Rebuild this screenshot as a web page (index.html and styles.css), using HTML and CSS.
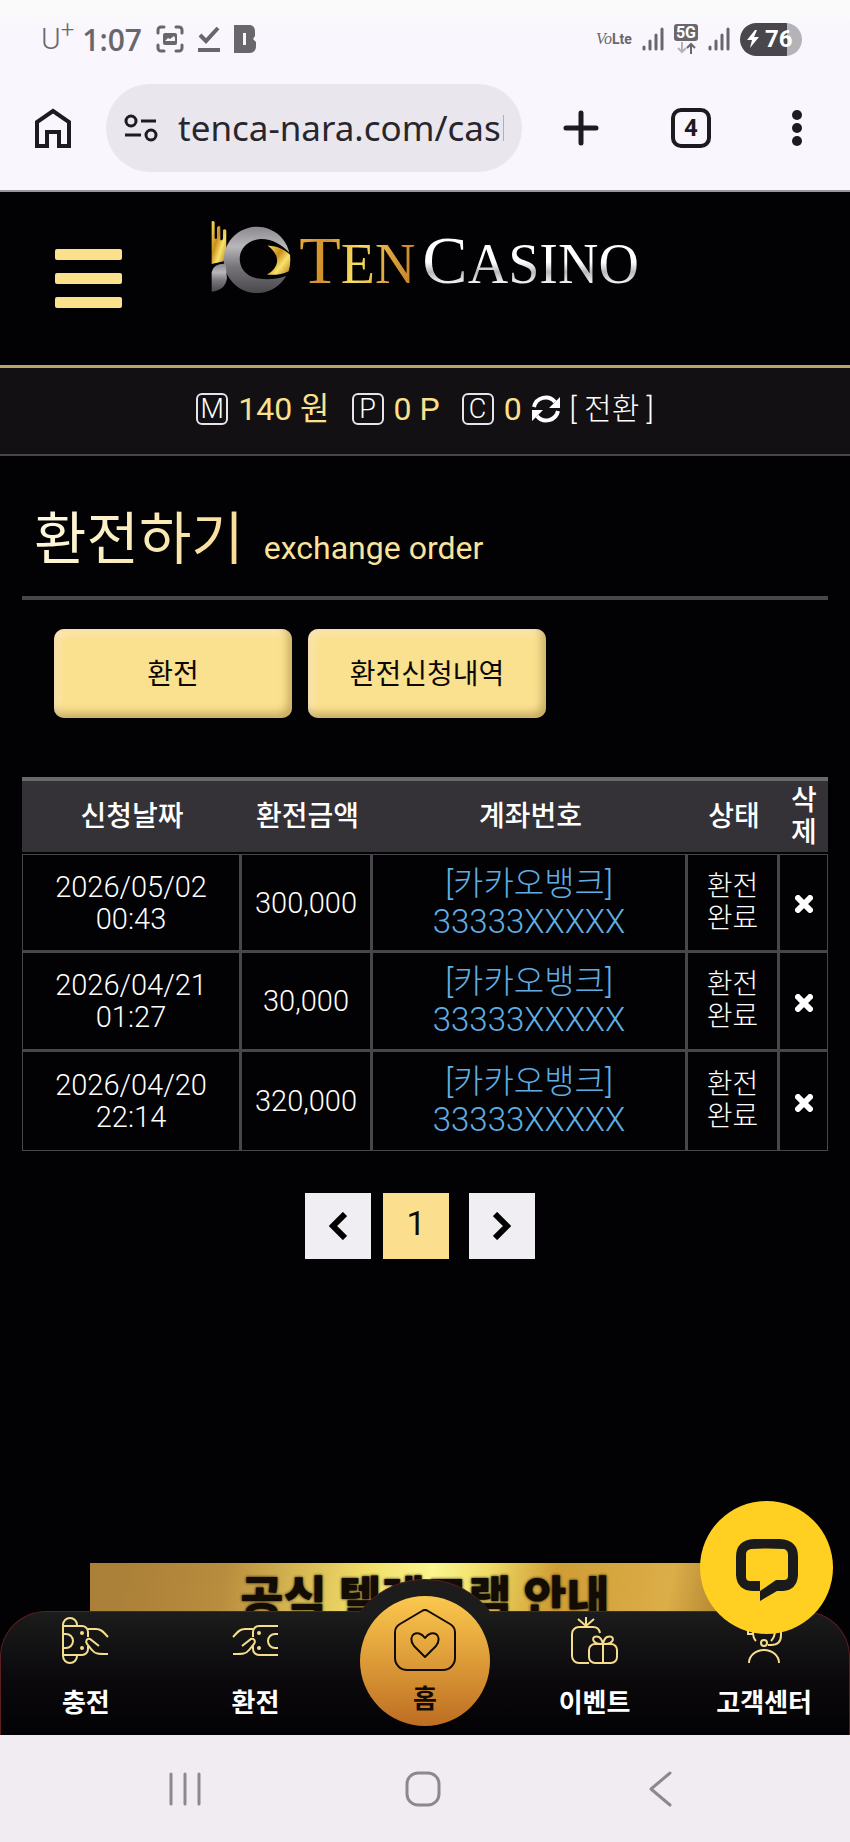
FILE: index.html
```html
<!DOCTYPE html>
<html lang="ko">
<head>
<meta charset="utf-8">
<meta name="viewport" content="width=device-width, initial-scale=1">
<title>TEN CASINO - 환전하기</title>
<link rel="stylesheet" href="styles.css">
</head>
<body>
<header class="chrome">
  <div class="status">
    <span class="carrier">U<sup>+</sup></span>
    <span class="clock">1:07</span>
    <svg class="status-icon" width="28" height="28" viewBox="0 0 28 28" fill="none" stroke="currentColor" stroke-width="3" stroke-linecap="round">
      <path d="M2 8V5a3 3 0 0 1 3-3h3M20 2h3a3 3 0 0 1 3 3v3M26 20v3a3 3 0 0 1-3 3h-3M8 26H5a3 3 0 0 1-3-3v-3"/>
      <rect x="7" y="8" width="14" height="12" rx="2" fill="currentColor" stroke="none"/>
      <path d="M9 16l3-3 2 1 4-3 1 2v3z" fill="#f9f7fc" stroke="none"/>
    </svg>
    <svg class="status-icon" width="22" height="26" viewBox="0 0 22 26" fill="none" stroke="currentColor" stroke-width="4">
      <path d="M2 9l6 6L20 2M0 24h22"/>
    </svg>
    <svg class="status-icon" width="22" height="28" viewBox="0 0 22 28">
      <path fill="currentColor" fill-rule="evenodd" d="M0 0h16a5 6 0 0 1 5 6v5l-2 3 3 3v5a6 6 0 0 1-6 6H0zM9 8v12h3V8z"/>
    </svg>
    <span class="status-right">
      <span class="volte"><i>Vo</i><b>Lte</b></span>
      <svg width="22" height="24" viewBox="0 0 22 24" stroke="currentColor" stroke-width="3" stroke-linecap="round"><path d="M2 20v2M8 14v8M14 8v14M20 2v20"/></svg>
      <span class="net"><b>5G</b>
        <svg width="20" height="12" viewBox="0 0 20 12" fill="none" stroke-width="2"><path d="M6 0v10M2 6l4 4 4-4" stroke="#b5b3b8"/><path d="M15 12V2M11 6l4-4 4 4" stroke="currentColor"/></svg>
      </span>
      <svg width="22" height="24" viewBox="0 0 22 24" stroke="currentColor" stroke-width="3" stroke-linecap="round"><path d="M2 20v2M8 14v8M14 8v14M20 2v20"/></svg>
      <span class="battery">
        <svg width="12" height="18" viewBox="0 0 12 18"><path fill="#fff" d="M8 0L0 10h5l-2 8 9-11H7l3-7z"/></svg>76
      </span>
    </span>
  </div>
  <div class="toolbar">
    <button class="tool" aria-label="홈페이지">
      <svg width="36" height="40" viewBox="0 0 36 40" fill="none" stroke="currentColor" stroke-width="4"><path d="M2 38V14L18 3l16 11v24H24V24H12v14z"/></svg>
    </button>
    <div class="omnibox">
      <svg width="34" height="28" viewBox="0 0 34 28" fill="none" stroke="currentColor" stroke-width="3"><circle cx="7" cy="7" r="5"/><path d="M17 7h15M1 21h16"/><circle cx="27" cy="21" r="5"/></svg>
      <input class="url" type="text" value="tenca-nara.com/cash" aria-label="주소">
    </div>
    <div class="actions">
      <button class="tool" aria-label="새 탭"><svg width="36" height="36" viewBox="0 0 36 36" stroke="currentColor" stroke-width="5" stroke-linecap="round"><path d="M18 3v30M3 18h30"/></svg></button>
      <button class="tool tabs" aria-label="탭 전환">4</button>
      <button class="tool" aria-label="메뉴"><svg width="28" height="36" viewBox="0 0 28 36" fill="currentColor"><circle cx="14" cy="5" r="5"/><circle cx="14" cy="18" r="5"/><circle cx="14" cy="31" r="5"/></svg></button>
    </div>
  </div>
</header>

<div class="site">
  <header class="site-head">
    <button class="burger" aria-label="메뉴 열기"><span></span><span></span><span></span></button>
    <a class="logo" href="#">
      <svg width="81" height="74" viewBox="36 30 244 222">
        <defs>
          <linearGradient id="silver" x1="0" y1="0" x2="0" y2="1"><stop offset="0" stop-color="#8b898d"/><stop offset=".3" stop-color="#b9b7bb"/><stop offset=".6" stop-color="#77757a"/><stop offset="1" stop-color="#4a484c"/></linearGradient>
          <linearGradient id="gold" x1="0" y1="0" x2="1" y2="1"><stop offset="0" stop-color="#f7e05a"/><stop offset=".4" stop-color="#c98f1e"/><stop offset=".65" stop-color="#f8e36a"/><stop offset="1" stop-color="#b87a1c"/></linearGradient>
        </defs>
        <path fill="url(#gold)" d="M38 34q5-4 9 2v48q4 6 7 0V52q5-8 10-2v38q4 6 8-2V60q5-5 10 0v66l-8 28-36 8z"/>
        <path fill="url(#silver)" d="M272 128A100 100 0 1 0 262 198C235 208 205 210 180 206C100 195 105 92 185 87C220 86 250 105 272 128Z"/>
        <path fill="url(#silver)" d="M38 246V188C42 168 60 160 80 162L84 205Q80 240 38 246Z"/>
        <path fill="url(#gold)" d="M206 106C240 108 260 120 274 134Q277 160 270 184C248 195 226 196 204 194C243 172 247 136 206 106Z"/>
      </svg>
      <span class="word gold">T<small>EN</small></span>
      <span class="word silver">C<small>ASINO</small></span>
    </a>
  </header>

  <div class="wallet">
    <span class="badge">M</span><span class="amount">140 원</span>
    <span class="badge">P</span><span class="amount">0 P</span>
    <span class="badge">C</span><span class="amount">0</span>
    <a class="convert" href="#">
      <svg width="28" height="28" viewBox="0 0 28 28" fill="none" stroke="#fff" stroke-width="4"><path d="M2 12A12 12 0 0 1 23 7M26 16A12 12 0 0 1 5 21"/><path fill="#fff" stroke="none" d="M28 2v11H17zM0 26V15h11z"/></svg>
      <span>[ 전환 ]</span>
    </a>
  </div>

  <main class="content">
    <h1 class="title"><span>환전하기</span><small>exchange order</small></h1>
    <div class="switch">
      <button class="gold-btn">환전</button>
      <button class="gold-btn">환전신청내역</button>
    </div>

    <table class="orders">
      <colgroup><col class="c-date"><col class="c-sum"><col class="c-acct"><col class="c-state"><col class="c-del"></colgroup>
      <thead>
        <tr><th>신청날짜</th><th>환전금액</th><th>계좌번호</th><th>상태</th><th>삭제</th></tr>
      </thead>
      <tbody>
        <tr><td>2026/05/02<br>00:43</td><td>300,000</td><td class="acct">[카카오뱅크]<br>33333XXXXX</td><td>환전<br>완료</td><td><button class="del" aria-label="삭제"><svg width="18" height="18" viewBox="0 0 18 18" stroke="#fff" stroke-width="6" stroke-linecap="round"><path d="M3 3l12 12M15 3L3 15"/></svg></button></td></tr>
        <tr><td>2026/04/21<br>01:27</td><td>30,000</td><td class="acct">[카카오뱅크]<br>33333XXXXX</td><td>환전<br>완료</td><td><button class="del" aria-label="삭제"><svg width="18" height="18" viewBox="0 0 18 18" stroke="#fff" stroke-width="6" stroke-linecap="round"><path d="M3 3l12 12M15 3L3 15"/></svg></button></td></tr>
        <tr><td>2026/04/20<br>22:14</td><td>320,000</td><td class="acct">[카카오뱅크]<br>33333XXXXX</td><td>환전<br>완료</td><td><button class="del" aria-label="삭제"><svg width="18" height="18" viewBox="0 0 18 18" stroke="#fff" stroke-width="6" stroke-linecap="round"><path d="M3 3l12 12M15 3L3 15"/></svg></button></td></tr>
      </tbody>
    </table>

    <nav class="pager" aria-label="페이지">
      <button aria-label="이전"><svg width="18" height="28" viewBox="0 0 18 28" fill="none" stroke="#000" stroke-width="6"><path d="M16 2L4 14l12 12"/></svg></button>
      <button class="current">1</button>
      <button class="next" aria-label="다음"><svg width="18" height="28" viewBox="0 0 18 28" fill="none" stroke="#000" stroke-width="6"><path d="M2 2l12 12L2 26"/></svg></button>
    </nav>
  </main>

  <a class="banner" href="#"><span>공식 텔레그램 안내</span></a>

  <nav class="tabbar">
    <div class="bump"></div>
    <a class="tab" href="#">
      <svg width="47" height="47" viewBox="0 0 47 47" fill="none" stroke="#f6dd8c" stroke-width="2"><path d="M1 8a7 7 0 0 1 14 0v1M1 8v31a7 7 0 0 0 14 0v-1M1 9h19a6 6 0 0 1 6 6v5M1 38h19a6 6 0 0 0 6-6v-3M1 17h3a7 7 0 0 1 0 14H1M26 12h8c6 0 8 4 12 8M37 29l-9-7c-3-1-5 2-3 5l5 6c3 4 6 4 16 4"/><circle cx="20" cy="16" r="1"/><circle cx="20" cy="31" r="1"/></svg>
      <span>충전</span>
    </a>
    <a class="tab" href="#">
      <svg width="47" height="47" viewBox="0 0 47 47" fill="none" stroke="#f6dd8c" stroke-width="2"><path d="M46 9H27a6 6 0 0 0-6 6v5M46 38H27a6 6 0 0 1-6-6v-3M46 17h-3a7 7 0 0 0 0 14h3M21 12h-8C7 12 5 16 1 20M10 29l9-7c3-1 5 2 3 5l-5 6c-3 4-6 4-16 4"/><circle cx="27" cy="16" r="1"/><circle cx="27" cy="31" r="1"/></svg>
      <span>환전</span>
    </a>
    <a class="tab home" href="#">
      <span class="home-disc">
        <svg width="62" height="62" viewBox="0 0 62 62" fill="none" stroke="#120c04" stroke-width="2"><path d="M28 2q3-2 6 0l22 13q5 3 5 8v26a12 12 0 0 1-12 12H13A12 12 0 0 1 1 49V23q0-5 5-8z"/><path d="M31 48L20 37C12 26 24 19 31 29C38 19 50 26 42 37z" stroke-linejoin="round"/></svg>
        <span>홈</span>
      </span>
    </a>
    <a class="tab" href="#">
      <svg width="47" height="47" viewBox="0 0 47 47" fill="none" stroke="#f6dd8c" stroke-width="2"><path d="M18 46H8a7 7 0 0 1-7-7V17a7 7 0 0 1 7-7h14q6 0 7 6M15 10V0M15 9L7 2M15 9l8-7"/><rect x="18" y="27" width="28" height="19" rx="6"/><path d="M32 27v19M32 27c-13 1-12-10-4-7q3 2 4 7c1-5 2-6 4-7c8-3 9 8-4 7"/></svg>
      <span>이벤트</span>
    </a>
    <a class="tab" href="#">
      <svg width="47" height="47" viewBox="0 0 47 47" fill="none" stroke="#f6dd8c" stroke-width="2"><path d="M8 46a15 13 0 0 1 30 0M9 14a14 13 0 0 1 28 0M40 12v6q0 10-10 10h-3M12 15q0 6 3 9M7 12v5h5M34 13q0 7-4 11"/><circle cx="23" cy="26" r="3"/></svg>
      <span>고객센터</span>
    </a>
    <button class="chat" aria-label="채팅 상담">
      <svg width="62" height="62" viewBox="0 0 62 62"><path d="M18 0Q31-1 44 0Q62 1 62 18V36Q61 51 47 52H41L24 62V52H16Q1 51 0 36V18Q0 1 18 0Z" fill="#1b1b1b"/><path d="M15 10Q31 9 48 10Q52 11 52 16V37Q52 41 48 41H40L24 52V42H14Q10 42 10 38V15Q10 11 15 10Z" fill="#ffd021"/></svg>
    </button>
  </nav>
</div>

<nav class="sysnav">
  <button aria-label="최근 앱"><svg width="36" height="36" viewBox="0 0 36 36" stroke="currentColor" stroke-width="3" stroke-linecap="round"><path d="M4 3v30M18 3v30M32 3v30"/></svg></button>
  <button aria-label="홈"><svg width="36" height="36" viewBox="0 0 36 36" fill="none" stroke="currentColor" stroke-width="3"><rect x="2" y="2" width="32" height="32" rx="11"/></svg></button>
  <button aria-label="뒤로"><svg width="36" height="36" viewBox="0 0 36 36" fill="none" stroke="currentColor" stroke-width="3" stroke-linecap="round" stroke-linejoin="round"><path d="M27 2L8 18l19 16"/></svg></button>
</nav>
</body>
</html>
```
FILE: styles.css
```css
* { box-sizing: border-box; }
body {
  margin: 0;
  min-height: 100vh;
  display: flex;
  flex-direction: column;
  background: #020103;
  color: #fff;
  font-family: Roboto, "Noto Sans CJK KR", sans-serif;
}
button { border: 0; padding: 0; margin: 0; background: none; color: inherit; font: inherit; }
a { color: inherit; text-decoration: none; }
svg { display: block; flex: none; }

/* browser chrome */
.chrome { background: linear-gradient(#fafafa, #f9f6fe 40px); color: #1d1b20; border-bottom: 2px solid #98969c; }
.status { display: flex; align-items: center; gap: 14px; height: 78px; padding: 0 48px 0 41px; color: #69676b; }
.carrier { font-size: 30px; font-weight: 300; line-height: 32px; margin-right: -6px; }
.carrier sup { font-size: 24px; line-height: 1px; }
.clock { font-size: 30px; font-weight: 600; font-family: "Open Sans", sans-serif; }
.status-right { margin-left: auto; display: flex; align-items: center; gap: 10px; }
.volte { font-size: 14px; display: flex; align-items: baseline; }
.volte i { font-family: "Liberation Serif", serif; font-size: 16px; }
.net { display: flex; flex-direction: column; align-items: center; gap: 1px; }
.net b { background: #69676b; color: #fff; border-radius: 3px; font-size: 16px; line-height: 17px; padding: 0 2px; }
.battery {
  display: flex; align-items: center; gap: 6px; width: 62px; height: 33px; padding-left: 7px;
  border-radius: 17px; background: linear-gradient(90deg, #49474b 76%, #b5b3b8 76%);
  color: #fff; font-size: 24px; font-weight: 700;
}
.toolbar { display: flex; align-items: center; height: 112px; padding: 0 39px 12px 35px; }
.tool { display: block; }
.omnibox {
  flex: 1; min-width: 0; display: flex; align-items: center; gap: 20px;
  height: 88px; margin-left: 35px; padding: 0 18px; border-radius: 44px; background: #e9e6ee;
}
.url { flex: 1; min-width: 0; border: 0; padding: 0; background: none; outline: 0; color: #28262c; font-family: "Noto Sans", sans-serif; font-size: 35px; line-height: 44px; }
.actions { display: flex; align-items: center; gap: 72px; margin-left: 41px; }
.tabs { width: 40px; height: 40px; border: 4px solid #1d1b20; border-radius: 10px; font-size: 24px; font-weight: 700; line-height: 32px; }

/* site */
.site { flex: 1; display: flex; flex-direction: column; }
.site-head {
  display: grid; grid-template-columns: 1fr auto 1fr; align-items: start;
  height: 176px; padding: 28px 55px 0; border-bottom: 3px solid #b9a46c;
}
.burger { display: flex; flex-direction: column; gap: 13px; width: 67px; margin-top: 29px; }
.burger span { height: 11px; border-radius: 2px; background: #fbe18c; }
.logo { display: flex; align-items: flex-start; }
.word { font: 68px/80px "Liberation Serif", serif; color: transparent; -webkit-background-clip: text; background-clip: text; margin-left: 7px; }
.word small { font-size: 56px; }
.gold { background-image: linear-gradient(100deg, #e8ae3e, #d2902c 25%, #f9e262 50%, #dda23a 75%, #c07b26); }
.silver { background-image: linear-gradient(#fff 50%, #b9b7bd 62%, #fff 78%); }

.wallet {
  display: flex; justify-content: center; align-items: center; height: 88px; padding-bottom: 4px;
  background: #121013; border-bottom: 2px solid #48464a;
}
.badge { width: 32px; height: 32px; margin-right: 10px; border: 2px solid #e6e4e8; border-radius: 6px; font-size: 27px; font-weight: 300; line-height: 29px; text-align: center; }
.amount { font-size: 32px; line-height: 40px; color: #fbe18c; margin-right: 22px; }
.amount:nth-of-type(6) { margin-right: 10px; }
.convert { display: flex; align-items: center; gap: 10px; font-size: 30px; font-weight: 300; line-height: 40px; }

.content { padding: 0 22px; }
.title {
  display: flex; align-items: baseline; gap: 20px;
  margin: 0; padding: 42px 12px 14px; border-bottom: 4px solid #48464a;
  font-size: 57px; font-weight: 400; line-height: 84px;
}
.title span { color: transparent; background: linear-gradient(120deg, #fffbe6, #f8e7b0 60%, #fbd98c); -webkit-background-clip: text; background-clip: text; }
.title small { font-size: 32px; line-height: 40px; color: #fbe39c; }
.switch { display: flex; gap: 16px; padding: 29px 32px 0; }
.gold-btn {
  width: 238px; height: 89px; border-radius: 10px; background: #fae190; color: #0c0905; font-size: 28px; padding-bottom: 4px;
  box-shadow: inset -4px -5px 8px rgba(120, 90, 20, .4), inset 4px 4px 8px rgba(255, 235, 215, .6);
}

.orders { width: 100%; margin-top: 59px; table-layout: fixed; border-collapse: separate; border-spacing: 0; text-align: center; line-height: 32px; }
.c-date { width: 220px; }
.c-sum { width: 131px; }
.c-state { width: 92px; }
.c-del { width: 48px; }
.orders th { height: 77px; padding: 0 9px; border-top: 4px solid #6a686c; border-bottom: 2px solid #020103; background: #343236; font-size: 28px; font-weight: 500; }
.orders td { height: 99px; padding: 0; border: solid #48464a; border-width: 0 3px 3px 0; font-size: 29px; font-weight: 300; }
.orders td:first-child { border-left-width: 1px; }
.orders td:last-child { border-right-width: 1px; }
.orders tbody tr:first-child td { border-top-width: 1px; }
.orders tbody tr:last-child td { border-bottom-width: 1px; }
.orders td:nth-child(4) { font-size: 28px; }
.orders .acct { font-size: 33px; line-height: 38px; color: #5faee3; }
.del { display: block; margin: 3px auto 0; }

.pager { display: flex; justify-content: center; gap: 12px; margin: 42px 10px 0 0; }
.pager button { display: grid; place-items: center; width: 66px; height: 66px; background: #f1eef3; color: #120c04; font-size: 34px; }
.pager .current { background: #fbdf8f; padding-bottom: 6px; }
.pager .next { margin-left: 8px; }

.banner {
  margin: auto 90px 0; height: 100px; padding-top: 6px; overflow: hidden; text-align: center;
  background: linear-gradient(100deg, #ab8038 5%, #b98d3e 20%, #f0dc66 40%, #fbf68f 50%, #f0dc66 58%, #cf9d34 68%, #dcae49 85%, #8a6118);
  color: #120c04; font-size: 47px; font-weight: 900; line-height: 60px; text-shadow: 0 0 3px #120c04;
}
.tabbar {
  position: sticky; bottom: 0; display: grid; grid-template-columns: repeat(5, 1fr);
  height: 124px; margin-top: -52px; border: 1px solid #5c1f1f; border-bottom: 0; border-radius: 46px 46px 0 0;
  background: linear-gradient(#1c1c1c, #0c0a0d 50%, #020103);
}
.bump { position: absolute; left: 50%; top: -33px; width: 164px; height: 36px; margin-left: -82px; overflow: hidden; }
.bump::before { content: ""; display: block; height: 164px; border-radius: 50%; background: #1c1c1c; border-top: 1px solid #5c1f1f; }
.tab { display: flex; flex-direction: column; align-items: center; gap: 20px; padding-top: 5px; font-size: 26px; font-weight: 700; line-height: 38px; }
.home { position: relative; padding: 0; }
.home-disc {
  display: flex; flex-direction: column; align-items: center; gap: 9px; width: 130px; height: 130px; margin-top: -16px; padding-top: 13px; flex: none;
  border-radius: 50%; background: linear-gradient(#fbc84e, #e0a03a 45%, #bd6d22); color: #120c04;
}
.chat {
  position: absolute; right: 16px; bottom: 101px; width: 133px; height: 133px; border-radius: 50%;
  background: #ffd021; display: grid; place-items: center; padding-top: 4px;
}

/* system navigation */
.sysnav { display: flex; justify-content: space-between; align-items: center; height: 107px; padding: 0 171px 0 167px; background: #f1ecf2; color: #8b898e; }
```
